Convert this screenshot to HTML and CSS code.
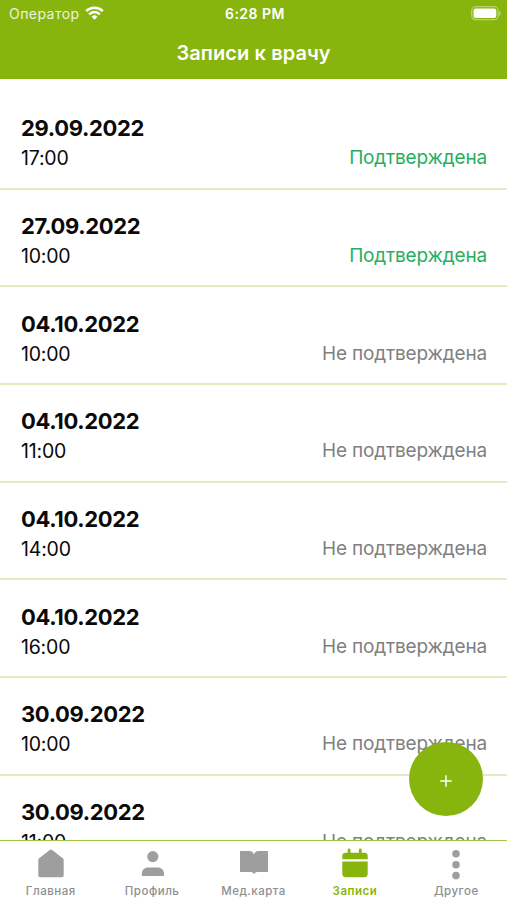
FILE: index.html
```html
<!DOCTYPE html>
<html lang="ru">
<head>
    <meta charset="utf-8">
    <title>Записи к врачу</title>
    <link rel="stylesheet" href="styles.css">
</head>
<body>
    <div class="app">
        <header class="header">
            <div class="status-bar">
                <div class="carrier">
                    <span class="carrier-name">Оператор</span>
                    <svg class="wifi" width="19" height="14" viewBox="0 0 19 14">
                        <g fill="none" stroke="#fff" stroke-width="2.5">
                            <path d="M1.2 5.1a11.8 11.8 0 0 1 16.6 0"/>
                            <path d="M4.2 8.3a7.5 7.5 0 0 1 10.6 0"/>
                        </g>
                        <path fill="#fff" d="M6.6 10.7a4.1 4.1 0 0 1 5.8 0L9.5 13.8z"/>
                    </svg>
                </div>
                <div class="clock">6:28 PM</div>
                <svg class="battery" width="31" height="15" viewBox="0 0 31 15">
                    <rect x="1.7" y=".7" width="26.4" height="13" rx="4" fill="none" stroke="#fff" stroke-opacity=".4" stroke-width="1.3"/>
                    <rect x="3.5" y="2.5" width="22.8" height="9.4" rx="2.2" fill="#fff"/>
                    <path d="M29.2 5v4.6c1.9-.7 1.9-3.9 0-4.6z" fill="#fff" fill-opacity=".5"/>
                </svg>
            </div>
            <h1 class="title">Записи к врачу</h1>
        </header>

        <main class="list">
            <div class="item">
                <div class="date">29.09.2022</div>
                <div class="row"><span class="time">17:00</span><span class="state confirmed">Подтверждена</span></div>
            </div>
            <div class="item">
                <div class="date">27.09.2022</div>
                <div class="row"><span class="time">10:00</span><span class="state confirmed">Подтверждена</span></div>
            </div>
            <div class="item">
                <div class="date">04.10.2022</div>
                <div class="row"><span class="time">10:00</span><span class="state">Не подтверждена</span></div>
            </div>
            <div class="item">
                <div class="date">04.10.2022</div>
                <div class="row"><span class="time">11:00</span><span class="state">Не подтверждена</span></div>
            </div>
            <div class="item">
                <div class="date">04.10.2022</div>
                <div class="row"><span class="time">14:00</span><span class="state">Не подтверждена</span></div>
            </div>
            <div class="item">
                <div class="date">04.10.2022</div>
                <div class="row"><span class="time">16:00</span><span class="state">Не подтверждена</span></div>
            </div>
            <div class="item">
                <div class="date">30.09.2022</div>
                <div class="row"><span class="time">10:00</span><span class="state">Не подтверждена</span></div>
            </div>
            <div class="item">
                <div class="date">30.09.2022</div>
                <div class="row"><span class="time">11:00</span><span class="state">Не подтверждена</span></div>
            </div>
        </main>

        <button class="add" aria-label="Добавить">
            <svg width="12" height="12" viewBox="0 0 12 12"><path d="M6 .3v11.4M.3 6h11.4" stroke="#fff" stroke-width="1.5"/></svg>
        </button>

        <nav class="tabs">
            <a class="tab">
                <svg width="34" height="34" viewBox="0 0 34 34"><path d="M15.8 3a1.8 1.8 0 0 1 2.4 0l10.6 8.2c.6.5.9 1 .9 1.8v15.2c0 1.3-.7 2-2 2H6.3c-1.3 0-2-.7-2-2V13c0-.8.3-1.3.9-1.8z"/></svg>
                <span>Главная</span>
            </a>
            <a class="tab">
                <svg width="34" height="34" viewBox="0 0 34 34"><circle cx="17.8" cy="9.6" r="5.6"/><path d="M6.8 29v-1.7c0-4.3 2.4-6.7 6.7-6.7h8.8c4.3 0 6.7 2.4 6.7 6.7V29z"/></svg>
                <span>Профиль</span>
            </a>
            <a class="tab">
                <svg width="34" height="34" viewBox="0 0 34 34"><path d="M3 4.5q0-.6.6-.6h8.9c2.4 0 3.900 1.500 4.500 3.700.6-2.200 2.100-3.700 4.500-3.700h8.900q.6 0 .6.600v20q0 .6-.6.600h-10.100c-1.500 0-2.500.7-3.300 2.200-.8-1.500-1.800-2.200-3.300-2.200H3.600q-.6 0-.6-.6z"/></svg>
                <span>Мед.карта</span>
            </a>
            <a class="tab active">
                <svg width="34" height="34" viewBox="0 0 34 34"><path d="M4.300 12.300V8.900c0-2 1.100-3.200 3.200-3.200h2.200V2.800q0-1.400 1.400-1.400t1.400 1.400v2.900h8.400V2.800q0-1.400 1.400-1.400t1.400 1.400v2.900h2.800c2.100 0 3.200 1.200 3.200 3.200v3.400zM4.300 14.600h25.400v12.500c0 2-1.200 3.200-3.200 3.200h-19c-2 0-3.200-1.200-3.200-3.200z"/></svg>
                <span>Записи</span>
            </a>
            <a class="tab">
                <svg width="34" height="34" viewBox="0 0 34 34"><circle cx="17" cy="6.700" r="3.800"/><circle cx="17" cy="17.700" r="3.800"/><circle cx="17" cy="28.600" r="3.800"/></svg>
                <span>Другое</span>
            </a>
        </nav>
    </div>
</body>
</html>
```

FILE: styles.css
```css
* {
    box-sizing: border-box;
}
body {
    margin: 0;
    font-family: Inter, "Liberation Sans", sans-serif;
    background: #fff;
    color: #0a0a0a;
}
.app {
    position: relative;
    display: flex;
    flex-direction: column;
    height: 900px;
    overflow: hidden;
}

/* header */
.header {
    flex: none;
    height: 79px;
    background: #87b50e;
    color: #fff;
}
.status-bar {
    display: grid;
    grid-template-columns: 1fr auto 1fr;
    align-items: center;
    height: 27px;
    padding: 0 6px 0 9px;
    font-size: 14px;
}
.carrier {
    display: flex;
    align-items: center;
    gap: 5px;
}
.carrier-name {
    opacity: .85;
    letter-spacing: .45px;
}
.wifi {
    margin-bottom: 2px;
}
.clock {
    font-weight: 600;
    letter-spacing: .5px;
}
.battery {
    justify-self: end;
}
.title {
    margin: 0;
    font-size: 20px;
    font-weight: 600;
    line-height: 52px;
    letter-spacing: .1px;
    text-align: center;
}

/* appointments */
.list {
    flex: 1;
    min-height: 0;
    overflow: hidden;
    padding-top: 13px;
}
.item {
    height: 97.7px;
    padding: 21.2px 20px 0 21px;
    border-bottom: 2px solid #e3ebc0;
}
.date {
    font-size: 22px;
    font-weight: 700;
    line-height: 30px;
    letter-spacing: -.35px;
}
.row {
    display: flex;
    justify-content: space-between;
    font-size: 19.5px;
    line-height: 30px;
}
.time {
    letter-spacing: -.2px;
}
.state {
    color: #808080;
    font-size: 19px;
    letter-spacing: -.17px;
}
.confirmed {
    color: #27ae60;
}

.add {
    position: absolute;
    right: 24px;
    bottom: 84px;
    display: flex;
    align-items: center;
    justify-content: center;
    width: 74px;
    height: 74px;
    padding: 3px 0 0;
    border: 0;
    border-radius: 50%;
    background: #87b50e;
}

/* bottom tabs */
.tabs {
    display: flex;
    flex: none;
    height: 60px;
    border-top: 1px solid #9fc43f;
    background: #fff;
}
.tab {
    display: flex;
    flex: 1;
    flex-direction: column;
    align-items: center;
    gap: 2px;
    padding-top: 6px;
    color: #8e8e8f;
    font-size: 11.5px;
    font-weight: 500;
    line-height: 16px;
    letter-spacing: .5px;
}
.tab svg {
    fill: #9e9e9e;
}
.active {
    color: #87b50e;
    font-weight: 600;
}
.active svg {
    fill: #87b50e;
}
```
